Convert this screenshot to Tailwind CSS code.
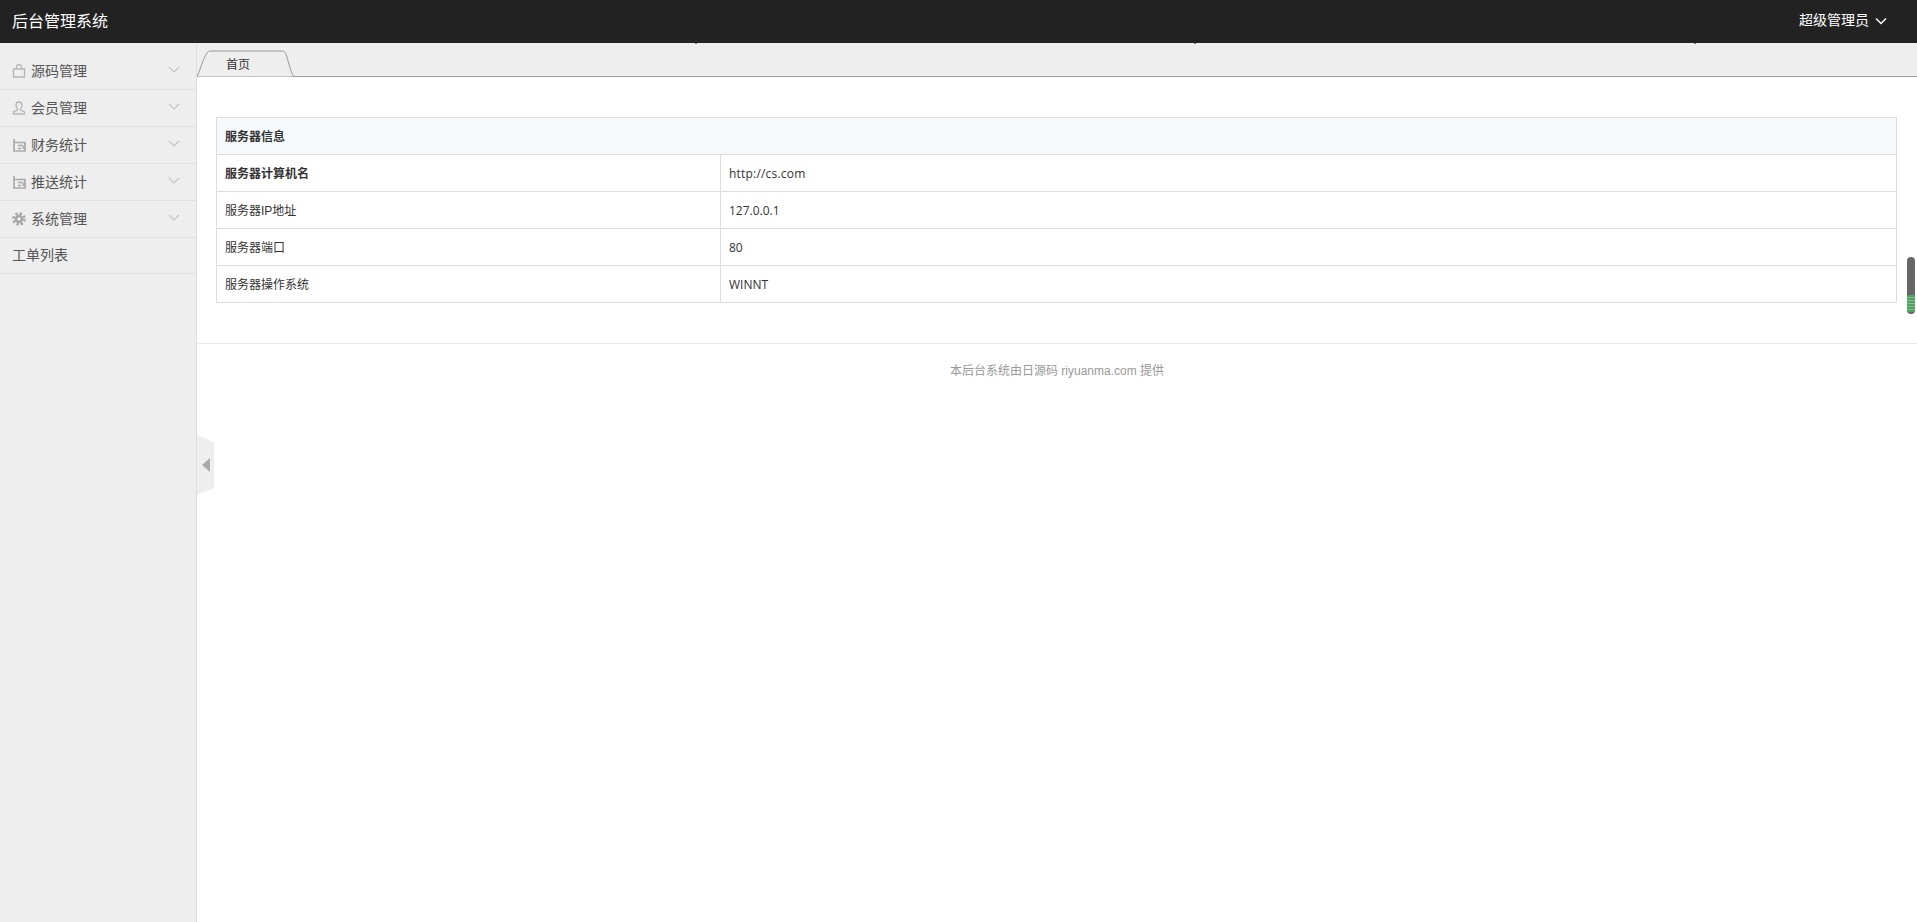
<!DOCTYPE html>
<html lang="zh-CN">
<head>
  <meta charset="UTF-8" />
  <title>后台管理系统</title>
  <script src="https://cdn.jsdelivr.net/npm/@tailwindcss/browser@4"></script>
</head>
<body class="bg-white font-['Liberation_Sans','Noto_Sans_CJK_SC',sans-serif] text-[12px] text-[#333] overflow-hidden">
  <div class="flex flex-col h-[922px]">

    <!-- Header -->
    <header class="h-[43px] shrink-0 bg-[#222] flex items-center justify-between pl-3 pr-[30px] text-white">
      <a href="#" class="text-[16px]">后台管理系统</a>
      <div class="flex items-center gap-[6px] text-[14px]">
        <span class="-mt-[2px]">超级管理员</span>
        <svg class="-mt-[2px]" width="12" height="8" viewBox="0 0 12 8" fill="none" stroke="#fff" stroke-width="1.5"><path d="M1 1.500l5 5 5-5" /></svg>
      </div>
    </header>

    <div class="flex flex-1 min-h-0">
      <!-- Sidebar -->
      <aside class="w-[197px] shrink-0 bg-[#eee] border-r border-[#ddd] pt-[10px] text-[14px] text-[#555]">
        <div class="h-[37px] flex items-center justify-between pl-3 pr-4 border-b border-[#e0e0e0]">
          <div class="flex items-center gap-[5px]">
            <svg width="14" height="14" viewBox="0 0 14 14" fill="none" stroke="#b5b5b5" stroke-width="1.3"><path d="M1.500 5h11v8h-11zM4.500 5V3a2.500 2.500 0 015 0v2" /></svg>
            <span>源码管理</span>
          </div>
          <svg class="-mt-[3px]" width="12" height="7" viewBox="0 0 12 7" fill="none" stroke="#c4c4c4" stroke-width="1.2"><path d="M1 1l5 5 5-5" /></svg>
        </div>
        <div class="h-[37px] flex items-center justify-between pl-3 pr-4 border-b border-[#e0e0e0]">
          <div class="flex items-center gap-[5px]">
            <svg width="14" height="14" viewBox="0 0 14 14" fill="none" stroke="#b5b5b5" stroke-width="1.3"><path d="M7 1a3 3 0 013 3c0 2-1 3.500-1.500 4v1l4 2v2h-11v-2l4-2V8C5 7.500 4 6 4 4a3 3 0 013-3z" /></svg>
            <span>会员管理</span>
          </div>
          <svg class="-mt-[3px]" width="12" height="7" viewBox="0 0 12 7" fill="none" stroke="#c4c4c4" stroke-width="1.2"><path d="M1 1l5 5 5-5" /></svg>
        </div>
        <div class="h-[37px] flex items-center justify-between pl-3 pr-4 border-b border-[#e0e0e0]">
          <div class="flex items-center gap-[5px]">
            <svg width="14" height="14" viewBox="0 0 14 14" fill="none" stroke="#aaa" stroke-width="1.7"><path d="M2 1v12h11V4.500H2M6 7.500h5M6 10.500h3M11.500 8v3" /></svg>
            <span>财务统计</span>
          </div>
          <svg class="-mt-[3px]" width="12" height="7" viewBox="0 0 12 7" fill="none" stroke="#c4c4c4" stroke-width="1.2"><path d="M1 1l5 5 5-5" /></svg>
        </div>
        <div class="h-[37px] flex items-center justify-between pl-3 pr-4 border-b border-[#e0e0e0]">
          <div class="flex items-center gap-[5px]">
            <svg width="14" height="14" viewBox="0 0 14 14" fill="none" stroke="#aaa" stroke-width="1.7"><path d="M2 1v12h11V4.500H2M6 7.500h5M6 10.500h3M11.500 8v3" /></svg>
            <span>推送统计</span>
          </div>
          <svg class="-mt-[3px]" width="12" height="7" viewBox="0 0 12 7" fill="none" stroke="#c4c4c4" stroke-width="1.2"><path d="M1 1l5 5 5-5" /></svg>
        </div>
        <div class="h-[37px] flex items-center justify-between pl-3 pr-4 border-b border-[#e0e0e0]">
          <div class="flex items-center gap-[5px]">
            <svg width="14" height="14" viewBox="0 0 14 14" fill="none" stroke="#a5a5a5"><circle cx="7" cy="7" r="5.500" stroke-width="2.500" stroke-dasharray="2.400 1.920" /><circle cx="7" cy="7" r="3" stroke-width="2.400" /></svg>
            <span>系统管理</span>
          </div>
          <svg class="-mt-[3px]" width="12" height="7" viewBox="0 0 12 7" fill="none" stroke="#c4c4c4" stroke-width="1.2"><path d="M1 1l5 5 5-5" /></svg>
        </div>
        <div class="h-[36px] flex items-center pl-3 border-b border-[#e0e0e0]">工单列表</div>
      </aside>

      <!-- Main -->
      <main class="relative flex-1 min-w-0">
        <!-- Tab bar -->
        <div class="h-[34px] bg-[#eee] border-b border-[#999] flex items-end">
          <svg class="-mb-px" width="98" height="27" viewBox="0 0 98 27">
            <path d="M0 26.500C2 24 6 8 10 3C11 1.500 12 1 14 1H85C87 1 88 2 89 4L94 21C95 24 96 26.500 98 26.500" fill="#eee" stroke="#999" />
            <text x="29" y="19" font-size="12" fill="#333">首页</text>
          </svg>
        </div>

        <!-- Server info -->
        <div class="pl-[19px] pr-5 pt-10">
          <table class="w-full border-collapse border border-[#ddd] text-[12px] leading-[35px]">
            <tbody>
              <tr class="h-[37px] bg-[#f5f9fc]">
                <th colspan="2" class="border border-[#ddd] px-2 pt-[2px] leading-[34px] text-left font-bold">服务器信息</th>
              </tr>
              <tr class="h-[37px]">
                <td class="w-[504px] border border-[#ddd] px-2 pt-[2px] leading-[34px] font-bold">服务器计算机名</td>
                <td class="border border-[#ddd] px-2 pt-px font-['Open_Sans','Noto_Sans_CJK_SC',sans-serif] tracking-[0.2px]">http://cs.com</td>
              </tr>
              <tr class="h-[37px]">
                <td class="border border-[#ddd] px-2 pt-[2px] leading-[34px]">服务器IP地址</td>
                <td class="border border-[#ddd] px-2 pt-px font-['Open_Sans','Noto_Sans_CJK_SC',sans-serif]">127.0.0.1</td>
              </tr>
              <tr class="h-[37px]">
                <td class="border border-[#ddd] px-2 pt-[2px] leading-[34px]">服务器端口</td>
                <td class="border border-[#ddd] px-2 pt-px font-['Open_Sans','Noto_Sans_CJK_SC',sans-serif]">80</td>
              </tr>
              <tr class="h-[37px]">
                <td class="border border-[#ddd] px-2 pt-[2px] leading-[34px]">服务器操作系统</td>
                <td class="border border-[#ddd] px-2 pt-px font-['Open_Sans','Noto_Sans_CJK_SC',sans-serif]">WINNT</td>
              </tr>
            </tbody>
          </table>
        </div>

        <!-- Footer -->
        <footer class="mt-10 border-t border-[#e8e8e8] pt-[19px] text-center text-[12px] leading-[17px] text-[#999]">
          本后台系统由日源码 riyuanma.com 提供
        </footer>

        <!-- Collapse handle -->
        <div class="absolute left-0 top-[392px] w-[17px] h-[60px] bg-[#eee] flex items-center justify-center [clip-path:polygon(0_0,100%_12%,100%_88%,0_100%)]">
          <svg width="8" height="14" viewBox="0 0 8 14"><path d="M8 0v14L0 7z" fill="#aaa" /></svg>
        </div>

        <!-- Small marks under the header -->
        <span class="absolute left-[498px] top-0 w-[2px] h-px bg-[#777]"></span>
        <span class="absolute left-[997px] top-0 w-[2px] h-px bg-[#777]"></span>
        <span class="absolute left-[1497px] top-0 w-[2px] h-px bg-[#777]"></span>

        <!-- Scroll widget -->
        <div class="absolute right-[2px] top-[214px] w-2 h-[57px] rounded-full bg-[#666] overflow-hidden flex flex-col justify-end">
          <div class="h-[17px] mb-[2px] bg-[repeating-linear-gradient(180deg,#4fa463_0,#4fa463_2px,#86b990_2px,#86b990_3px)]"></div>
        </div>
      </main>
    </div>
  </div>
</body>
</html>
